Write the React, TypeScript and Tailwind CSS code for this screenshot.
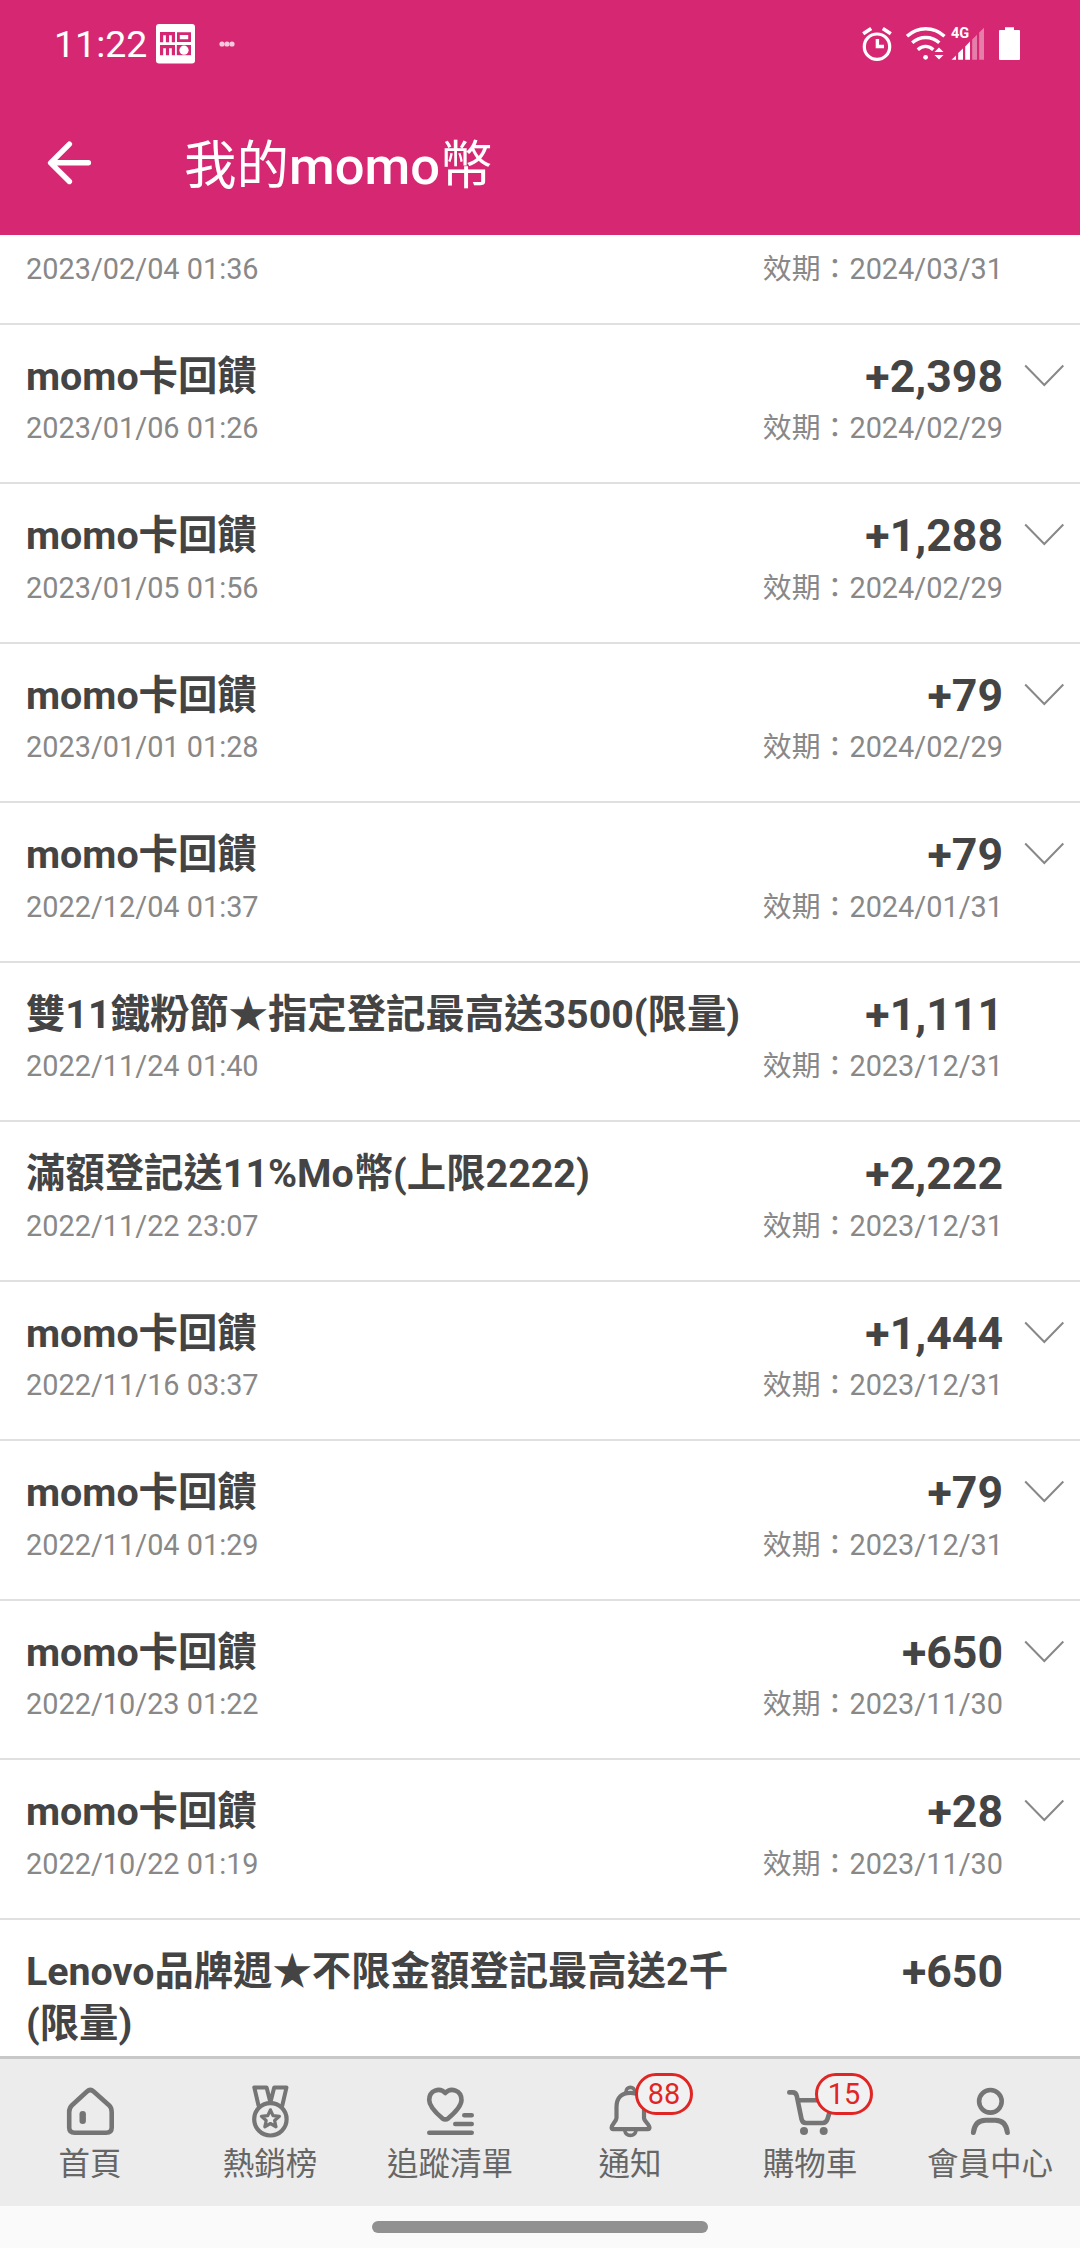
import type { ReactNode } from 'react'

type Entry = {
  title: string
  time?: string
  amount: string
  expiry?: string
  expandable?: boolean
}

const entries: Entry[] = [
  { title: 'momo卡回饋', time: '2023/01/06 01:26', amount: '+2,398', expiry: '2024/02/29', expandable: true },
  { title: 'momo卡回饋', time: '2023/01/05 01:56', amount: '+1,288', expiry: '2024/02/29', expandable: true },
  { title: 'momo卡回饋', time: '2023/01/01 01:28', amount: '+79', expiry: '2024/02/29', expandable: true },
  { title: 'momo卡回饋', time: '2022/12/04 01:37', amount: '+79', expiry: '2024/01/31', expandable: true },
  { title: '雙11鐵粉節★指定登記最高送3500(限量)', time: '2022/11/24 01:40', amount: '+1,111', expiry: '2023/12/31' },
  { title: '滿額登記送11%Mo幣(上限2222)', time: '2022/11/22 23:07', amount: '+2,222', expiry: '2023/12/31' },
  { title: 'momo卡回饋', time: '2022/11/16 03:37', amount: '+1,444', expiry: '2023/12/31', expandable: true },
  { title: 'momo卡回饋', time: '2022/11/04 01:29', amount: '+79', expiry: '2023/12/31', expandable: true },
  { title: 'momo卡回饋', time: '2022/10/23 01:22', amount: '+650', expiry: '2023/11/30', expandable: true },
  { title: 'momo卡回饋', time: '2022/10/22 01:19', amount: '+28', expiry: '2023/11/30', expandable: true },
  { title: 'Lenovo品牌週★不限金額登記最高送2千(限量)', amount: '+650' },
]

function StatusBar() {
  return (
    <div className="flex h-[88px] items-center pl-[54px] pr-[60px] text-white">
      <span className="w-[102px] text-[37.5px] leading-[44px]">11:22</span>
      <svg width="39" height="40" viewBox="0 0 39 40">
        <rect width="39" height="39.5" rx="3" fill="#fff" />
        <g fill="none" stroke="#d62872" strokeWidth="3.2">
          <path d="M5.6 18.2V9.6H17.4V18.2M11.5 9.6V18.2" />
          <path d="M22.4 9.6H33.6V16.6H22.4Z" strokeWidth="2.8" />
          <path d="M5.6 31.2V22.6H17.4V31.2M11.5 22.6V31.2" />
        </g>
        <rect x="20.8" y="21" width="14.2" height="10.2" fill="#d62872" />
        <circle cx="28" cy="26.2" r="4.6" fill="#fff" />
      </svg>
      <svg className="ml-[24px] opacity-75" width="16" height="6" viewBox="0 0 16 6" fill="#fff">
        <circle cx="3" cy="3" r="2.6" />
        <circle cx="8" cy="3" r="2.6" />
        <circle cx="13" cy="3" r="2.6" />
      </svg>
      <div className="ml-auto flex items-center">
        {/* alarm */}
        <svg width="30" height="36" viewBox="0 0 30 36" fill="none" stroke="#fff">
          <circle cx="15" cy="20.7" r="12.7" strokeWidth="3.2" />
          <path d="M1.2 7.8 9.2 2.4M28.8 7.8 20.8 2.4" strokeWidth="3.6" />
          <path d="M15.4 13V20.5H22" strokeWidth="3.4" />
        </svg>
        {/* wifi */}
        <svg className="ml-[14px]" width="40" height="36" viewBox="0 0 40 36" fill="none" stroke="#fff" strokeWidth="3.4">
          <path d="M1 10.2C12 .2 27.5 .2 38.5 10.2" />
          <path d="M6.2 16.8C14 9.7 25.5 9.7 33.3 16.8" />
          <path d="M11.8 23.8C16.5 19.6 22.5 19.3 27.3 23.8" />
          <circle cx="19.6" cy="31.3" r="2.4" fill="#fff" stroke="none" />
          <path d="M33 21.5 37.5 26H28.5ZM33 33.5 37.5 29H28.5Z" fill="#fff" stroke="none" />
        </svg>
        {/* signal */}
        <svg className="ml-[4px]" width="36" height="36" viewBox="0 0 36 36" fill="#fff">
          <path d="M1.5 33.8 6 29.5V33.8Z" />
          <path d="M8.2 27 13 22.5V33.8H8.2Z" />
          <path d="M15.2 20.5 20 15.5V33.8H15.2Z" />
          <path d="M22.2 13.5 27 8.7V33.8H22.2Z" opacity=".4" />
          <path d="M29.2 6.5 34 1.8V33.8H29.2Z" opacity=".4" />
          <text x="1" y="11.8" fontSize="14.5" fontWeight="700">4G</text>
        </svg>
        {/* battery */}
        <svg className="ml-[13px]" width="21" height="36" viewBox="0 0 21 36" fill="#fff">
          <path d="M6 1.3H15V4H20Q21 4 21 5V32.8Q21 34 20 34H1Q0 34 0 32.8V5Q0 4 1 4H6Z" />
        </svg>
      </div>
    </div>
  )
}

function Header() {
  return (
    <header className="h-[235px] shrink-0 bg-[#d62872]">
      <StatusBar />
      <div className="flex h-[147px] items-center pl-[47px] text-white">
        <svg
          className="mr-[91px]"
          width="46"
          height="46"
          viewBox="0 0 46 46"
          fill="none"
          stroke="#fff"
          strokeWidth="5.4"
          strokeLinecap="round"
          strokeLinejoin="round"
        >
          <path d="M22.4 5.1 3.6 23.8 22.4 42.5M4 23.8H41.4" />
        </svg>
        <h1 className="pt-[9px] text-[52.5px] leading-[64px] font-medium">
          <span className="font-normal">我的</span>momo<span className="font-normal">幣</span>
        </h1>
      </div>
    </header>
  )
}

function Row({ entry }: { entry: Entry }) {
  return (
    <li className="flex min-h-[159.5px] shrink-0 border-t-2 border-[#e0e0e0] pt-[25.7px] pl-[26px] last:min-h-0">
      <div className="w-[724px]">
        <h2 className="text-[39.375px] leading-[52px] font-bold text-[#444]">{entry.title}</h2>
        {entry.time && <p className="mt-[8.5px] text-[28.875px] leading-[34px] text-[#888]">{entry.time}</p>}
      </div>
      <div className="flex-1 text-right">
        <p className="text-[44.625px] leading-[52px] font-bold text-[#444]">{entry.amount}</p>
        {entry.expiry && (
          <p className="mt-[8.5px] text-[28.875px] leading-[34px] text-[#888]">效期：{entry.expiry}</p>
        )}
      </div>
      <div className="w-[77px] pt-[13px] pl-[21px]">
        {entry.expandable && (
          <svg width="41" height="24" viewBox="0 0 41 24" fill="none" stroke="#888" strokeWidth="2">
            <path d="M1.2 1.5 20.3 21 39.3 1.5" />
          </svg>
        )}
      </div>
    </li>
  )
}

function NavIcon({ children }: { children: ReactNode }) {
  return (
    <svg
      width="60"
      height="60"
      viewBox="0 0 60 60"
      fill="none"
      stroke="#757575"
      strokeWidth="4.6"
      strokeLinecap="round"
      strokeLinejoin="round"
    >
      {children}
    </svg>
  )
}

const tabs: { label: string; badge?: string; icon: ReactNode }[] = [
  {
    label: '首頁',
    icon: (
      <>
        <path d="M9.2 30q0-4.2 2.8-6.8L27 9.5q3.3-3 6.6 0L49 23.2q2.7 2.6 2.7 6.8V45.5q0 5.3-5.5 5.3H14.7q-5.5 0-5.5-5.3Z" />
        <path d="M22.7 32.3V38.8" strokeWidth="6.4" />
      </>
    ),
  },
  {
    label: '熱銷榜',
    icon: (
      <>
        <circle cx="30.4" cy="37.3" r="16.2" strokeWidth="4.2" />
        <path d="M18.5 23.5 14.3 5.4H26.6L30.4 20.5 34.2 5.4H46.5L42.3 23.5" strokeWidth="4" />
        <path
          d="M30.4 27.8 33 33.7 39.4 34.3 34.6 38.5 36 44.8 30.4 41.5 24.8 44.8 26.2 38.5 21.4 34.3 27.8 33.7Z"
          strokeWidth="3.2"
        />
      </>
    ),
  },
  {
    label: '追蹤清單',
    icon: (
      <>
        <path d="M25.3 11C19.5 5 9.2 8.5 9.2 18 9.2 24.5 16 31 22.3 36.3q3 2.3 6 0C34.5 31 41.5 24.5 41.5 18 41.5 8.5 31 5 25.3 11Z" />
        <path d="M9.3 50.8H51.7M35.3 42H51.7M44.3 33.3H51.7" />
      </>
    ),
  },
  {
    label: '通知',
    badge: '88',
    icon: (
      <g strokeWidth="4.2">
        <path d="M16.5 36V25C16.5 15.5 22 10.8 30.3 10.8S44 15.5 44 25V36C44 39 49.5 42.5 49.5 45.5q0 1.6-1.6 1.6H13.2q-1.6 0-1.6-1.6C11.6 42.5 16.5 39 16.5 36Z" />
        <path d="M25.8 10.5C26 3.6 34.8 3.6 35 10.5" strokeWidth="3.6" />
        <path d="M24.7 48.5C26 55 34.8 55 36.1 48.5" strokeWidth="3.6" />
      </g>
    ),
  },
  {
    label: '購物車',
    badge: '15',
    icon: (
      <>
        <path d="M9.3 10.4H12.5Q16 10.4 16.8 14L21.5 37Q22.3 41 26 41H42.5Q46.2 41 47.5 37L52 22.5Q53 18.2 49 18.2H18" />
        <circle cx="24" cy="49" r="4" fill="#757575" stroke="none" />
        <circle cx="43.7" cy="49" r="4" fill="#757575" stroke="none" />
      </>
    ),
  },
  {
    label: '會員中心',
    icon: (
      <>
        <circle cx="30.4" cy="19.3" r="11.3" />
        <path d="M13.4 50.5C14.4 42.5 18.5 38.3 25.5 38.3H35.3C42.3 38.3 46.4 42.5 47.4 50.5" strokeWidth="5" />
      </>
    ),
  },
]

function BottomNav() {
  return (
    <nav className="grid h-[150px] shrink-0 grid-cols-6 border-t-[3px] border-[#c8c8c8] bg-[#ececec]">
      {tabs.map((tab) => (
        <div key={tab.label} className="relative flex flex-col items-center pt-[23px]">
          <NavIcon>{tab.icon}</NavIcon>
          <span className="mt-[3px] text-[31.5px] leading-[40px] whitespace-nowrap text-[#666]">{tab.label}</span>
          {tab.badge && (
            <span className="absolute top-[14px] left-[95px] h-[42px] w-[58px] rounded-full border-[3px] border-[#e02525] bg-[#f1f1f1] text-center text-[28.875px] leading-[37px] text-[#e02525]">
              {tab.badge}
            </span>
          )}
        </div>
      ))}
    </nav>
  )
}

export default function App() {
  return (
    <div className="flex h-[2248px] w-[1080px] flex-col overflow-hidden bg-white font-[Roboto,'Noto_Sans_CJK_TC',sans-serif]">
      <Header />
      <ul className="flex min-h-0 flex-1 flex-col overflow-hidden">
        <li className="flex h-[87.9px] shrink-0 justify-between pt-[17px] pr-[77px] pl-[26px] text-[28.875px] leading-[34px] text-[#888]">
          <span>2023/02/04 01:36</span>
          <span>效期：2024/03/31</span>
        </li>
        {entries.map((entry) => (
          <Row key={entry.time ?? entry.title} entry={entry} />
        ))}
      </ul>
      <BottomNav />
      <div className="flex h-[42px] shrink-0 justify-center bg-[#fafafa] pt-[15px]">
        <div className="h-[12px] w-[336px] rounded-full bg-[#919191]" />
      </div>
    </div>
  )
}
